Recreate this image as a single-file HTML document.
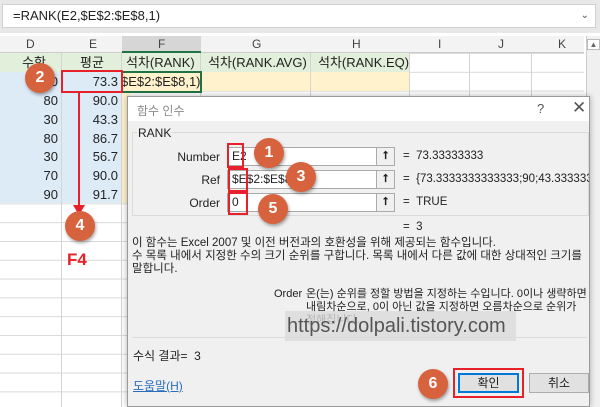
<!DOCTYPE html>
<html><head><meta charset="utf-8"><style>
*{margin:0;padding:0;box-sizing:border-box}
body{width:600px;height:407px;overflow:hidden;background:#fff;font-family:"Liberation Sans","Noto Sans CJK KR",sans-serif;position:relative;font-size:12px;color:#222}
.a{position:absolute}
.circ{position:absolute;width:30px;height:30px;border-radius:50%;background:#d6623e;color:#fff;font-weight:bold;font-size:16px;text-align:center;line-height:30px;box-shadow:1px 2px 3px rgba(0,0,0,.35)}
.rb{position:absolute;border:2px solid #e8202a}
.inp{position:absolute;left:227px;width:168px;height:19px;border:1px solid #aaa;background:#fff;font-size:12px;line-height:17px;padding-left:4px}
.up{position:absolute;right:0;top:0;width:18px;height:17px;border-left:1px solid #aaa;background:#f0f0f0;text-align:center;font-size:11px;font-weight:bold;line-height:17px}
.lbl{position:absolute;font-size:12px;text-align:right;width:80px;left:140px}
.val{position:absolute;left:403px;font-size:11.5px;white-space:nowrap}
</style></head><body>
<div class="a" style="left:0;top:0;width:600px;height:33px;background:#e8e8e8"></div>
<div class="a" style="left:2px;top:4px;width:594px;height:24px;background:#fff;border:1px solid #d0d0d0;font-size:13px;line-height:22px;padding-left:10px">=RANK(E2,$E$2:$E$8,1)<span style="position:absolute;right:6px;top:0;font-size:10px;color:#555">⌄</span></div>
<div class="a" style="left:0;top:36px;width:584px;height:17px;background:#f3f3f3;border-bottom:1px solid #ccc"></div>
<div class="a" style="left:122px;top:36px;width:79px;height:17px;background:#d6d6d6;border-bottom:2px solid #217346"></div>
<div class="a" style="left:0;top:36px;width:584px;height:17px;font-size:12px;color:#444;line-height:17px">
<span class="a" style="left:26px">D</span><span class="a" style="left:89px">E</span><span class="a" style="left:158px">F</span><span class="a" style="left:252px">G</span><span class="a" style="left:352px">H</span><span class="a" style="left:438px">I</span><span class="a" style="left:498px">J</span><span class="a" style="left:558px">K</span></div>
<div class="a" style="left:586px;top:36px;width:14px;height:371px;background:#f0f0f0;border-left:1px solid #ccc"><div style="font-size:8px;text-align:center;color:#666;border:1px solid #bbb;margin-top:3px;background:#fff">▲</div></div>
<div class="a" style="left:0;top:53px;width:584px;height:354px;
background-image:linear-gradient(#d9d9d9 1px,transparent 1px);background-size:100% 18.8px"></div>
<div class="a" style="left:0;top:53px;width:62px;height:19px;background:#e2efda"></div>
<div class="a" style="left:62px;top:53px;width:60px;height:19px;background:#e2efda"></div>
<div class="a" style="left:122px;top:53px;width:288px;height:19px;background:#e2efda"></div>
<div class="a" style="left:0;top:72px;width:122px;height:131px;background:#ddebf7"></div>
<div class="a" style="left:122px;top:72px;width:288px;height:19px;background:#fff2cc"></div>
<div class="a" style="left:122px;top:91px;width:8px;height:112px;background:#fff2cc"></div>
<div class="a" style="left:0;top:53px;width:584px;height:354px;background-image:linear-gradient(90deg,transparent 61px,#d4d4d4 61px,#d4d4d4 62px,transparent 62px,transparent 121px,#d4d4d4 121px,#d4d4d4 122px,transparent 122px,transparent 200px,#d4d4d4 200px,#d4d4d4 201px,transparent 201px,transparent 310px,#d4d4d4 310px,#d4d4d4 311px,transparent 311px,transparent 409px,#d4d4d4 409px,#d4d4d4 410px,transparent 410px,transparent 469px,#d4d4d4 469px,#d4d4d4 470px,transparent 470px,transparent 531px,#d4d4d4 531px,#d4d4d4 532px,transparent 532px)"></div>
<div class="a" style="top:53px;left:0;width:584px;font-size:13px;line-height:19px">
<span class="a" style="left:22px">수학</span><span class="a" style="left:80px">평균</span><span class="a" style="left:126px">석차(RANK)</span><span class="a" style="left:208px">석차(RANK.AVG)</span><span class="a" style="left:318px">석차(RANK.EQ)</span></div>
<div class="a" style="left:0;top:72px;width:122px;font-size:13px;text-align:right">
<div style="position:absolute;top:2px;right:64px">80</div><div style="position:absolute;top:2px;right:4px">73.3</div>
<div style="position:absolute;top:21px;right:64px">80</div><div style="position:absolute;top:21px;right:4px">90.0</div>
<div style="position:absolute;top:40px;right:64px">30</div><div style="position:absolute;top:40px;right:4px">43.3</div>
<div style="position:absolute;top:59px;right:64px">80</div><div style="position:absolute;top:59px;right:4px">86.7</div>
<div style="position:absolute;top:77px;right:64px">30</div><div style="position:absolute;top:77px;right:4px">56.7</div>
<div style="position:absolute;top:96px;right:64px">70</div><div style="position:absolute;top:96px;right:4px">90.0</div>
<div style="position:absolute;top:115px;right:64px">90</div><div style="position:absolute;top:115px;right:4px">91.7</div>
</div>
<div class="a" style="left:121px;top:71px;width:81px;height:22px;border:2px solid #217346;background:#fff2cc;font-size:13px;line-height:18px;overflow:hidden;white-space:nowrap;text-indent:-2px">$E$2:$E$8,1)</div>
<div class="rb" style="left:61px;top:70px;width:62px;height:23px"></div>
<div class="a" style="left:78px;top:93px;width:2px;height:116px;background:#e8202a"></div>
<div class="a" style="left:73px;top:205px;width:0;height:0;border-left:6px solid transparent;border-right:6px solid transparent;border-top:10px solid #e8202a"></div>
<div class="a" style="left:67px;top:250px;color:#e8202a;font-weight:bold;font-size:17px">F4</div>
<div class="a" style="left:127px;top:96px;width:463px;height:311px;background:#f0f0f0;border:1px solid #999;box-shadow:0 0 6px rgba(0,0,0,.3)">
<div class="a" style="left:0;top:0;width:461px;height:24px;background:#fff"></div>
<div class="a" style="left:9px;top:5px;font-size:12px;color:#888">함수 인수</div>
<div class="a" style="left:409px;top:4px;font-size:13px;color:#555">?</div>
<div class="a" style="left:444px;top:1px;font-size:17px;color:#555">✕</div>
</div>
<div class="a" style="left:132px;top:132px;width:457px;height:84px;border:1px solid #dadada"></div>
<div class="a" style="left:137px;top:126px;font-size:12px;background:#f0f0f0;padding:0 1px">RANK</div>
<div class="lbl" style="top:150px">Number</div>
<div class="lbl" style="top:173px">Ref</div>
<div class="lbl" style="top:196px">Order</div>
<div class="inp" style="top:147px">E2<div class="up">⭡</div></div>
<div class="inp" style="top:170px">$E$2:$E$8<div class="up">⭡</div></div>
<div class="inp" style="top:193px">0<div class="up">⭡</div></div>
<div class="a" style="left:403px;top:140px;width:186px;height:90px;overflow:hidden">
<div class="val" style="left:0;top:10px">=&nbsp;&nbsp;73.33333333</div>
<div class="val" style="left:0;top:33px">=&nbsp;&nbsp;{73.3333333333333;90;43.3333333</div>
<div class="val" style="left:0;top:56px">=&nbsp;&nbsp;TRUE</div>
<div class="val" style="left:0;top:81px">=&nbsp;&nbsp;3</div>
</div>
<div class="a" style="left:132px;top:237px;font-size:11.5px;line-height:13px;color:#222">이 함수는 Excel 2007 및 이전 버전과의 호환성을 위해 제공되는 함수입니다.<br>수 목록 내에서 지정한 수의 크기 순위를 구합니다. 목록 내에서 다른 값에 대한 상대적인 크기를<br>말합니다.</div>
<div class="a" style="left:274px;top:288px;font-size:11px">Order</div>
<div class="a" style="left:306px;top:288px;font-size:11px;line-height:13px">온(는) 순위를 정할 방법을 지정하는 수입니다. 0이나 생략하면<br>내림차순으로, 0이 아닌 값을 지정하면 오름차순으로 순위가<br><span style="color:#999">정해집니다.</span></div>
<div class="a" style="left:285px;top:311px;width:231px;height:30px;background:rgba(205,205,205,.5);font-size:20px;color:#555;line-height:30px;padding-left:2px;white-space:nowrap">https://dolpali.tistory.com</div>
<div class="a" style="left:132px;top:337px;width:455px;height:1px;background:#dcdcdc"></div>
<div class="a" style="left:133px;top:347px;font-size:12px">수식 결과=&nbsp;&nbsp;3</div>
<div class="a" style="left:133px;top:377px;font-size:12px;color:#2a6ebb;text-decoration:underline">도움말(H)</div>
<div class="a" style="left:458px;top:373px;width:61px;height:20px;background:#e1e1e1;border:2px solid #0078d7;text-align:center;font-size:12px;line-height:16px">확인</div>
<div class="rb" style="left:453px;top:368px;width:71px;height:30px"></div>
<div class="a" style="left:529px;top:373px;width:60px;height:20px;background:#e1e1e1;border:1px solid #adadad;text-align:center;font-size:12px;line-height:18px">취소</div>
<div class="rb" style="left:227px;top:143px;width:17px;height:25px"></div>
<div class="rb" style="left:228px;top:168px;width:20px;height:24px"></div>
<div class="rb" style="left:228px;top:192px;width:20px;height:23px"></div>
<div class="circ" style="left:25px;top:63px">2</div>
<div class="circ" style="left:254px;top:138px">1</div>
<div class="circ" style="left:286px;top:162px">3</div>
<div class="circ" style="left:258px;top:194px">5</div>
<div class="circ" style="left:65px;top:211px">4</div>
<div class="circ" style="left:418px;top:369px">6</div>
</body></html>
